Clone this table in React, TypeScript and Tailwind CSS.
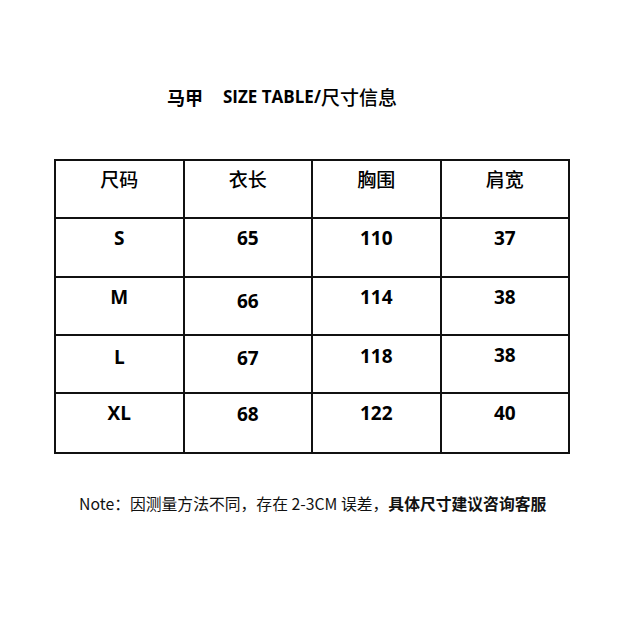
import React from "react";

const cjk = '"Noto Sans CJK SC", "Noto Sans", sans-serif';
const num = '"Open Sans", "Noto Sans CJK SC", sans-serif';

const headers = ["尺码", "衣长", "胸围", "肩宽"];

// [size, length, chest, shoulder] + extra top offset per cell
const rows: { cells: string[]; shift: number[] }[] = [
  { cells: ["S", "65", "110", "37"], shift: [0, 0, 0, 0] },
  { cells: ["M", "66", "114", "38"], shift: [0, 4, 0, 0] },
  { cells: ["L", "67", "118", "38"], shift: [2, 3, 1, 0] },
  { cells: ["XL", "68", "122", "40"], shift: [0, 1, 0, 0] },
];

const padTop = ["pt-[10px]", "pt-[11px]", "pt-[12px]", "pt-[13px]", "pt-[14px]"];

export default function App() {
  return (
    <div className="w-[624px] h-[624px] bg-white text-black overflow-hidden">
      {/* Title */}
      <div
        className="mt-[85px] pl-[167px] h-[24px] leading-[24px] flex items-center whitespace-nowrap"
        style={{ fontFamily: cjk }}
      >
        <span className="text-[18px] font-bold">马甲</span>
        <span className="ml-[20px] text-[17px] font-bold" style={{ fontFamily: num }}>
          SIZE TABLE/
        </span>
        <span className="text-[19px] font-medium">尺寸信息</span>
      </div>

      {/* Size table */}
      <table className="mt-[50px] ml-[54px] w-[516px] table-fixed border-collapse">
        <thead>
          <tr className="h-[58px]">
            {headers.map((h) => (
              <th
                key={h}
                className="border-2 border-[#111] align-top pt-[8px] text-[19px] leading-[19px] font-medium text-center"
                style={{ fontFamily: cjk }}
              >
                {h}
              </th>
            ))}
          </tr>
        </thead>
        <tbody>
          {rows.map((r, i) => (
            <tr key={r.cells[0]} className={i === 0 ? "h-[59px]" : i === 3 ? "h-[60px]" : "h-[58px]"}>
              {r.cells.map((c, j) => (
                <td
                  key={j}
                  className={`border-2 border-[#111] align-top text-center text-[19px] leading-[19px] font-bold ${padTop[r.shift[j]]}`}
                  style={{ fontFamily: num }}
                >
                  {c}
                </td>
              ))}
            </tr>
          ))}
        </tbody>
      </table>

      {/* Note */}
      <div
        className="mt-[40px] pl-[79px] h-[20px] leading-[20px] text-[15.8px] whitespace-nowrap text-[#111]"
        style={{ fontFamily: cjk }}
      >
        Note：因测量方法不同，存在 2-3CM 误差，<span className="font-bold">具体尺寸建议咨询客服</span>
      </div>
    </div>
  );
}
